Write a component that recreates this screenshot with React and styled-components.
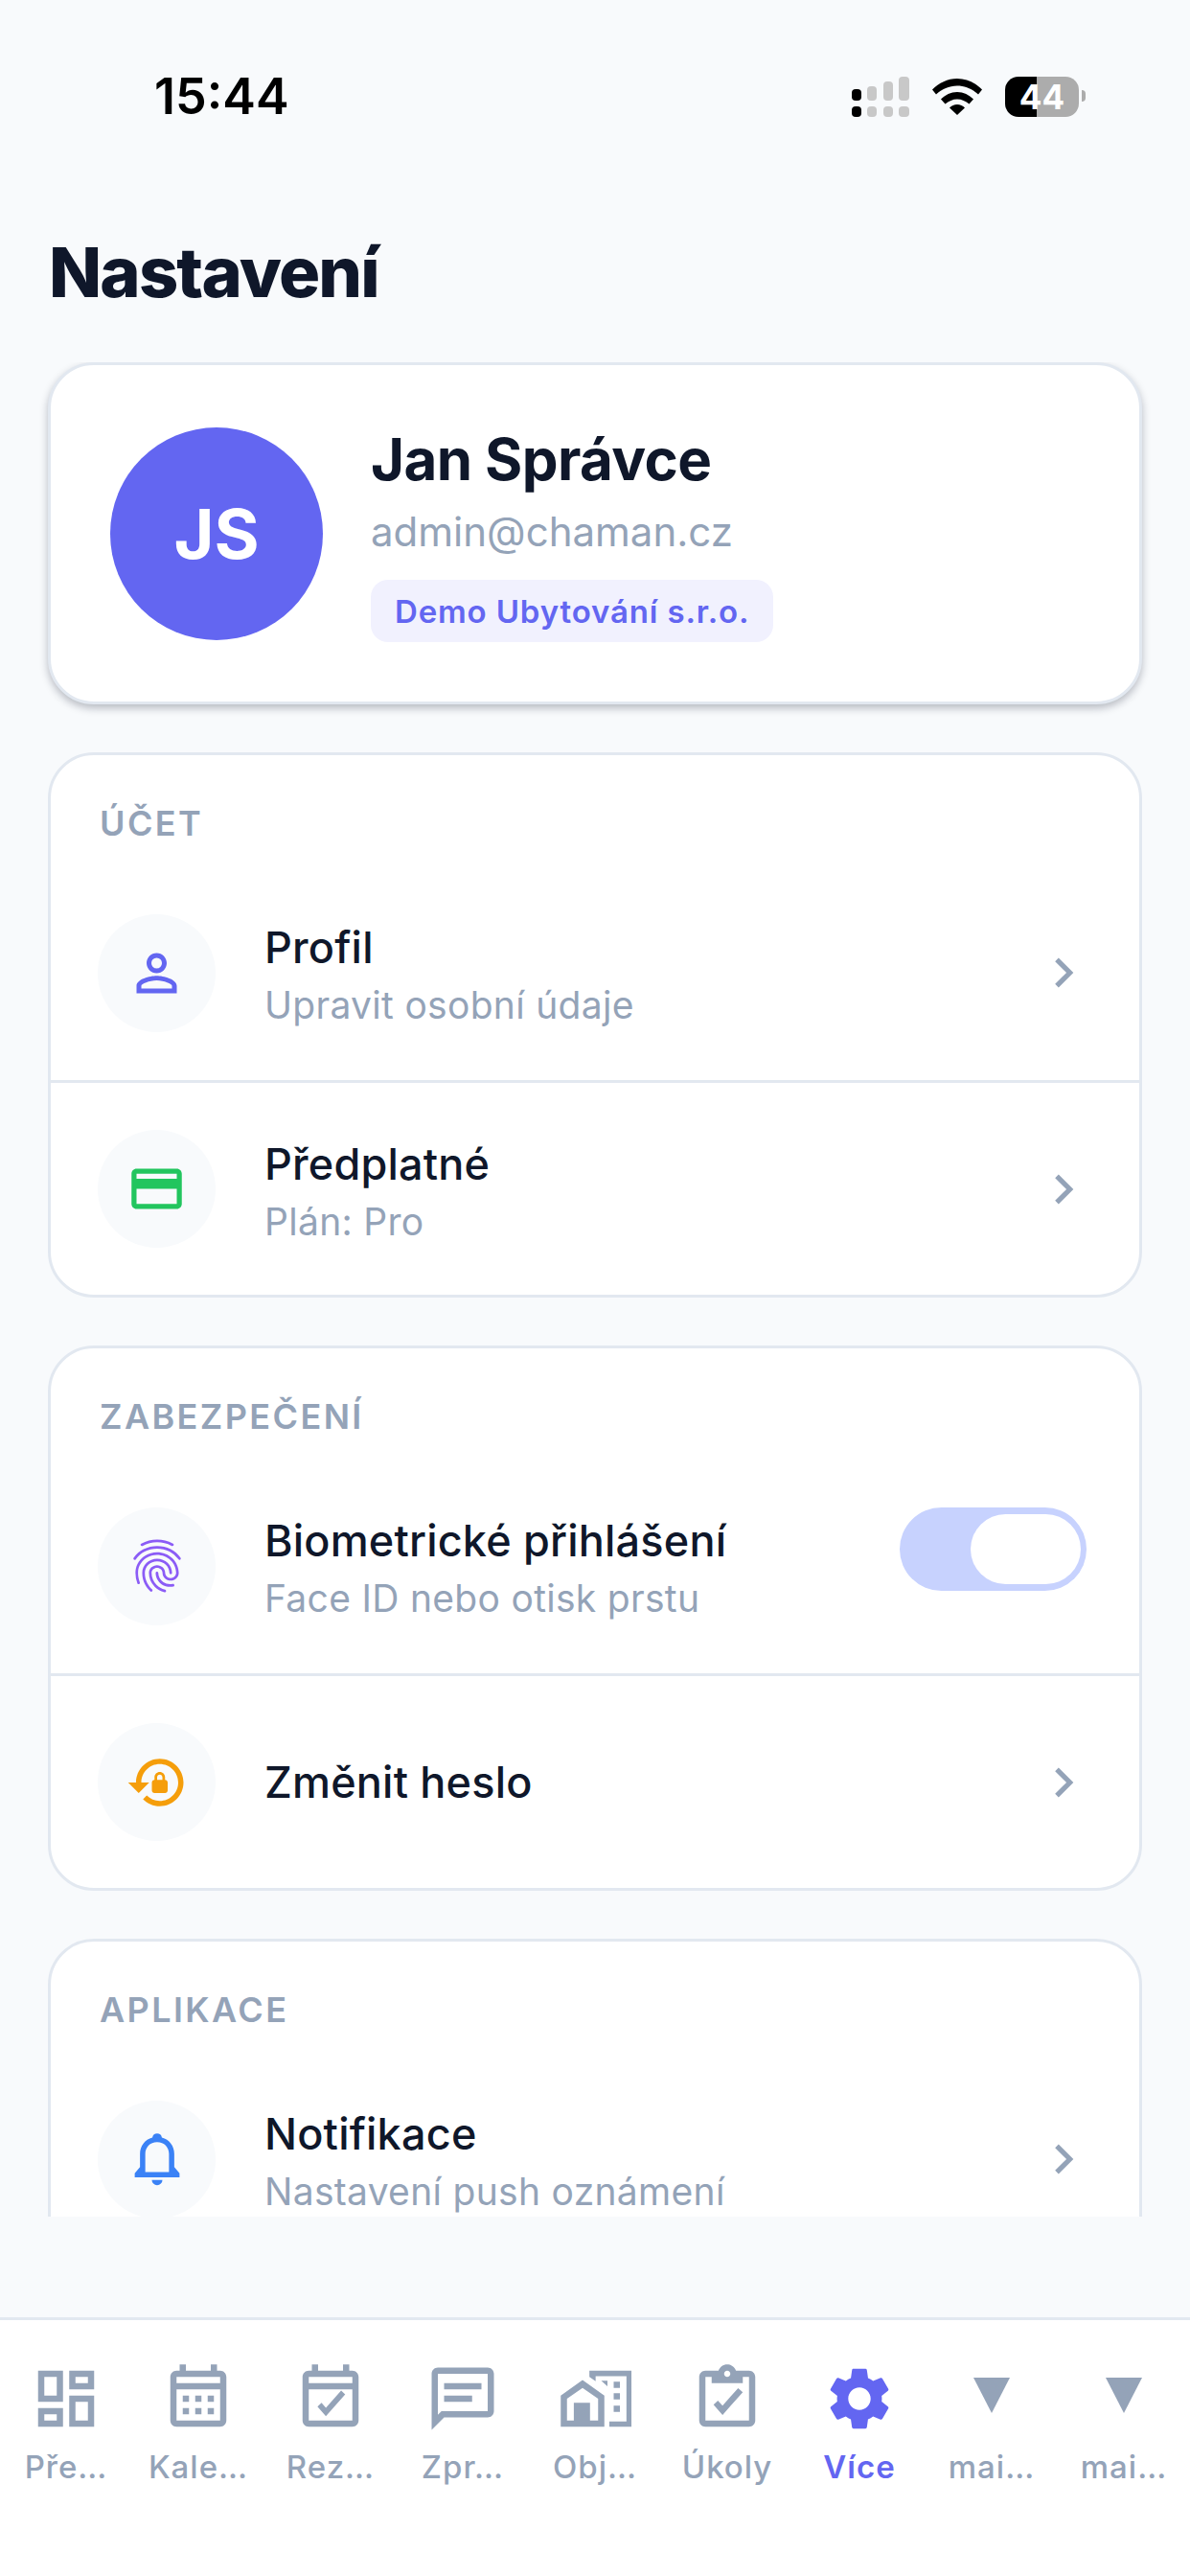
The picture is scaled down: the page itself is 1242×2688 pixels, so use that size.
import React from "react";
import styled, { createGlobalStyle } from "styled-components";
import {
  MdOutlineDashboard,
  MdSettings,
  MdPersonOutline,
  MdOutlineCreditCard,
  MdFingerprint,
  MdChevronRight,
} from "react-icons/md";

const GlobalStyle = createGlobalStyle`
  html, body { margin: 0; padding: 0; background: #f8fafc; }
  * { box-sizing: border-box; }
  body { font-family: Inter, "Noto Sans", sans-serif; }
`;

const Page = styled.div`
  width: 1242px;
  height: 2688px;
  display: flex;
  flex-direction: column;
  background: #f8fafc;
  overflow: hidden;
`;

const StatusBar = styled.div`
  height: 200px;
  flex: none;
  display: flex;
  align-items: center;
  justify-content: space-between;
  padding: 2px 116px 0 161px;
`;

const Time = styled.div`
  font-size: 52px;
  font-weight: 600;
  color: #000;
  line-height: 60px;
`;

const StatusIcons = styled.div`
  display: flex;
  align-items: center;
  gap: 22px;
`;

const Battery = styled.div`
  width: 77px;
  height: 42px;
  margin-left: 2px;
  border-radius: 14px;
  background: linear-gradient(90deg, #000 0 33px, #acacac 33px);
  color: #fff;
  font-size: 35px;
  font-weight: 700;
  line-height: 42px;
  text-align: center;
  position: relative;
  &::after {
    content: "";
    position: absolute;
    right: -7px;
    top: 14px;
    width: 4px;
    height: 12px;
    border-radius: 0 4px 4px 0;
    background: #acacac;
  }
`;

const Title = styled.h1`
  margin: 0 0 52px;
  padding: 42px 51px 0;
  font-size: 72px;
  line-height: 84px;
  font-weight: 800;
  letter-spacing: -1.8px;
  color: #0f172a;
`;

const Scroll = styled.div`
  flex: 1;
  min-height: 0;
  overflow: hidden;
  margin-bottom: 105px;
  padding: 0 50px;
  display: flex;
  flex-direction: column;
  gap: 50px;
`;

const ProfileCard = styled.div`
  flex: none;
  height: 357px;
  display: flex;
  align-items: center;
  gap: 50px;
  padding: 0 62px;
  background: #fff;
  border: 3px solid #e2e8f0;
  border-radius: 48px;
  box-shadow: 0 4px 8px rgba(15, 23, 42, 0.28);
`;

const Avatar = styled.div`
  width: 222px;
  height: 222px;
  flex: none;
  border-radius: 50%;
  background: #6366f1;
  color: #fff;
  font-size: 72px;
  font-weight: 700;
  display: flex;
  align-items: center;
  justify-content: center;
`;

const ProfileInfo = styled.div`
  display: flex;
  flex-direction: column;
  align-items: flex-start;
`;

const Name = styled.div`
  font-size: 60px;
  line-height: 72px;
  font-weight: 700;
  letter-spacing: -0.6px;
  color: #0f172a;
`;

const Email = styled.div`
  margin-top: 14px;
  font-size: 42px;
  line-height: 51px;
  color: #94a3b8;
`;

const OrgTag = styled.div`
  margin-top: 25px;
  height: 65px;
  padding: 0 25px;
  display: flex;
  align-items: center;
  border-radius: 18px;
  background: #f1f1fe;
  color: #6366f1;
  font-size: 33px;
  font-weight: 600;
  letter-spacing: 0.85px;
`;

const Section = styled.div`
  flex: none;
  background: #fff;
  border: 3px solid #e2e8f0;
  border-radius: 48px;
`;

const SectionTitle = styled.div`
  padding: 49px 51px 0;
  height: 115px;
  font-size: 36px;
  line-height: 44px;
  font-weight: 600;
  letter-spacing: 2.4px;
  color: #94a3b8;
`;

const Row = styled.div`
  height: 224px;
  display: flex;
  align-items: center;
  padding: 0 48px 0 49px;
  border-top: ${(p) => (p.$divider ? "3px solid #e2e8f0" : "none")};
`;

const IconCircle = styled.div`
  width: 123px;
  height: 123px;
  flex: none;
  border-radius: 50%;
  background: #f8fafc;
  display: flex;
  align-items: center;
  justify-content: center;
  color: ${(p) => p.$color};
`;

const RowText = styled.div`
  flex: 1;
  margin-left: 51px;
`;

const RowTitle = styled.div`
  font-size: 45px;
  line-height: 58px;
  font-weight: 500;
  letter-spacing: 0.2px;
  color: #0f172a;
`;

const RowSub = styled.div`
  margin: 7px 0 -3px;
  font-size: 39px;
  line-height: 48px;
  letter-spacing: 0.3px;
  color: #94a3b8;
`;

const Chevron = styled(MdChevronRight)`
  color: #94a3b8;
  flex: none;
`;

const Toggle = styled.div`
  width: 195px;
  height: 87px;
  flex: none;
  align-self: flex-start;
  margin: 51px 7px 0 0;
  padding: 7px 6px;
  border-radius: 44px;
  background: #c7d2fe;
  display: flex;
  justify-content: flex-end;
`;

const Thumb = styled.div`
  width: 115px;
  height: 73px;
  border-radius: 37px;
  background: #fff;
`;

const TabBar = styled.div`
  flex: none;
  height: 270px;
  display: grid;
  grid-template-columns: repeat(9, 1fr);
  background: #fff;
  border-top: 3px solid #e2e8f0;
  padding-top: 43px;
`;

const Tab = styled.div`
  display: flex;
  flex-direction: column;
  align-items: center;
  color: ${(p) => (p.$active ? "#6366f1" : "#94a3b8")};
`;

const TabLabel = styled.div`
  margin-top: 11px;
  font-size: 33px;
  line-height: 42px;
  font-weight: ${(p) => (p.$active ? 600 : 500)};
  letter-spacing: 1px;
  white-space: nowrap;
`;

const Signal = () => (
  <svg width="62" height="42" viewBox="0 0 62 42">
    <rect x="0" y="13" width="10" height="12" rx="4" fill="#000" />
    <rect x="0" y="31" width="10" height="11" rx="4" fill="#000" />
    <g fill="#c8c8c8">
      <rect x="16" y="10" width="10" height="15" rx="4" />
      <rect x="16" y="31" width="10" height="11" rx="4" />
      <rect x="33" y="5" width="10" height="20" rx="4" />
      <rect x="33" y="31" width="10" height="11" rx="4" />
      <rect x="49" y="0" width="11" height="25" rx="4" />
      <rect x="49" y="31" width="11" height="11" rx="4" />
    </g>
  </svg>
);

const Wifi = () => (
  <svg width="52" height="38" viewBox="0 0 52 38">
    <path d="M0 11.5C7 4.500 16 0 26 0s19 4.500 26 11.500l-4 5C42 11 34.500 7.500 26 7.500S10 11 4 16.500z" />
    <path d="M9 21.500C13.500 17 19.500 14 26 14s12.500 3 17 7.500l-4.500 5C35 23.500 30.500 21.500 26 21.500s-9 2-12.500 5z" />
    <path d="M18 30.500c2-2 5-3.500 8-3.500s6 1.500 8 3.500L26 38z" />
  </svg>
);

// material style glyphs the packages only have in a different cut
const Glyph = ({ size, d }) => (
  <svg width={size} height={size} viewBox="0 0 24 24" fill="currentColor" fillRule="evenodd">
    <path d={d} />
  </svg>
);

const calendarFrame =
  "M19 3h-1V1h-2v2H8V1H6v2H5c-1.100 0-2 .900-2 2v14c0 1.100.900 2 2 2h14c1.100 0 2-.900 2-2V5c0-1.100-.900-2-2-2zm0 2v2H5V5h14zM5 19V9h14v10H5z";

const CalendarGrid = ({ size }) => (
  <Glyph
    size={size}
    d={`${calendarFrame}M7 11h2v2H7zm4 0h2v2h-2zm4 0h2v2h-2zM7 15h2v2H7zm4 0h2v2h-2zm4 0h2v2h-2z`}
  />
);

const CalendarCheck = ({ size }) => (
  <Glyph size={size} d={`${calendarFrame}M10.500 17.600 7.800 14.500l1.300-1.200 1.400 1.600 4.900-5.500 1.300 1.200z`} />
);

const Chat = ({ size }) => (
  <Glyph
    size={size}
    d="M20 2H4c-1.100 0-1.990.900-1.990 2L2 22l4-4h14c1.100 0 2-.900 2-2V4c0-1.100-.900-2-2-2zm0 14H5.170L4 17.170V4h16v12zM6 7h12v2H6zm0 4h9v2H6z"
  />
);

const HomeWork = ({ size }) => (
  <Glyph
    size={size}
    d="M1 11v10h14V11L8 6zM3 12l5-3.500 5 3.500v7H3zM5.200 13.300h5.200V19H5.200zM10.200 3v1.970l2 1.430V4.800h9.900v14.500h-5.500V21h7.100V3zM14 6.200h2V8zM18 6.500h2v2h-2zM18 10.200h2v2h-2zM18 14.200h2v2h-2z"
  />
);

const ClipboardCheck = ({ size }) => (
  <Glyph
    size={size}
    d="M19 3h-4.180C14.400 1.840 13.300 1 12 1s-2.400.840-2.820 2H5c-1.100 0-2 .900-2 2v14c0 1.100.900 2 2 2h14c1.100 0 2-.900 2-2V5c0-1.100-.900-2-2-2zm-7 0c.550 0 1 .450 1 1s-.450 1-1 1-1-.450-1-1 .450-1 1-1zm7 16H5V5h2v2h10V5h2v14zM10.500 17.200 7.600 13.900l1.400-1.300 1.500 1.600 5-5.600 1.500 1.300z"
  />
);

const LockReset = ({ size }) => (
  <Glyph
    size={size}
    d="M13 3c-4.970 0-9 4.030-9 9H1l4 3.990L9 12H6c0-3.870 3.130-7 7-7s7 3.130 7 7-3.130 7-7 7c-1.930 0-3.680-.790-4.940-2.060l-1.420 1.420C8.270 19.990 10.510 21 13 21c4.970 0 9-4.030 9-9s-4.030-9-9-9zm2 8v-1c0-1.100-.900-2-2-2s-2 .900-2 2v1c-.550 0-1 .450-1 1v3c0 .550.450 1 1 1h4c.550 0 1-.450 1-1v-3c0-.550-.450-1-1-1zm-1 0h-2v-1c0-.550.450-1 1-1s1 .450 1 1v1z"
  />
);

const Bell = ({ size }) => (
  <Glyph
    size={size}
    d="M12 2.300a1.900 1.900 0 0 1 1.800 1.500C16.600 4.500 18.500 7 18.500 10v5l2 2.400v1.500h-17v-1.500l2-2.400v-5c0-3 1.900-5.500 4.700-6.200A1.900 1.900 0 0 1 12 2.300zM12 5.500c-2.700 0-4.500 2-4.500 4.500v6.900h9V10c0-2.500-1.800-4.500-4.500-4.500zM10 19.900h4a2 2 0 0 1-4 0z"
  />
);

const Missing = ({ size }) => (
  <svg width={size} height={size} viewBox="0 0 78 78" fill="currentColor">
    <polygon points="20,17 58,17 39,54" />
  </svg>
);

const tabs = [
  { label: "Pře…", Icon: MdOutlineDashboard },
  { label: "Kale…", Icon: CalendarGrid },
  { label: "Rez…", Icon: CalendarCheck },
  { label: "Zpr…", Icon: Chat },
  { label: "Obj…", Icon: HomeWork },
  { label: "Úkoly", Icon: ClipboardCheck },
  { label: "Více", Icon: MdSettings, active: true },
  { label: "mai…", Icon: Missing },
  { label: "mai…", Icon: Missing },
];

function SettingRow({ icon, color, title, sub, divider, toggle }) {
  return (
    <Row $divider={divider}>
      <IconCircle $color={color}>{icon}</IconCircle>
      <RowText>
        <RowTitle>{title}</RowTitle>
        {sub && <RowSub>{sub}</RowSub>}
      </RowText>
      {toggle ? (
        <Toggle>
          <Thumb />
        </Toggle>
      ) : (
        <Chevron size={62} />
      )}
    </Row>
  );
}

export default function App() {
  return (
    <Page>
      <GlobalStyle />
      <StatusBar>
        <Time>15:44</Time>
        <StatusIcons>
          <Signal />
          <Wifi />
          <Battery>44</Battery>
        </StatusIcons>
      </StatusBar>
      <Title>Nastavení</Title>
      <Scroll>
        <ProfileCard>
          <Avatar>JS</Avatar>
          <ProfileInfo>
            <Name>Jan Správce</Name>
            <Email>admin@chaman.cz</Email>
            <OrgTag>Demo Ubytování s.r.o.</OrgTag>
          </ProfileInfo>
        </ProfileCard>
        <Section>
          <SectionTitle>ÚČET</SectionTitle>
          <SettingRow icon={<MdPersonOutline size={63} />} color="#6366f1" title="Profil" sub="Upravit osobní údaje" />
          <SettingRow divider icon={<MdOutlineCreditCard size={63} />} color="#22c55e" title="Předplatné" sub="Plán: Pro" />
        </Section>
        <Section>
          <SectionTitle>ZABEZPEČENÍ</SectionTitle>
          <SettingRow toggle icon={<MdFingerprint size={66} />} color="#8b5cf6" title="Biometrické přihlášení" sub="Face ID nebo otisk prstu" />
          <SettingRow divider icon={<LockReset size={66} />} color="#f59e0b" title="Změnit heslo" />
        </Section>
        <Section>
          <SectionTitle>APLIKACE</SectionTitle>
          <SettingRow icon={<Bell size={66} />} color="#3b82f6" title="Notifikace" sub="Nastavení push oznámení" />
        </Section>
      </Scroll>
      <TabBar>
        {tabs.map(({ label, Icon, active }, i) => (
          <Tab key={i} $active={active}>
            <Icon size={78} />
            <TabLabel $active={active}>{label}</TabLabel>
          </Tab>
        ))}
      </TabBar>
    </Page>
  );
}
